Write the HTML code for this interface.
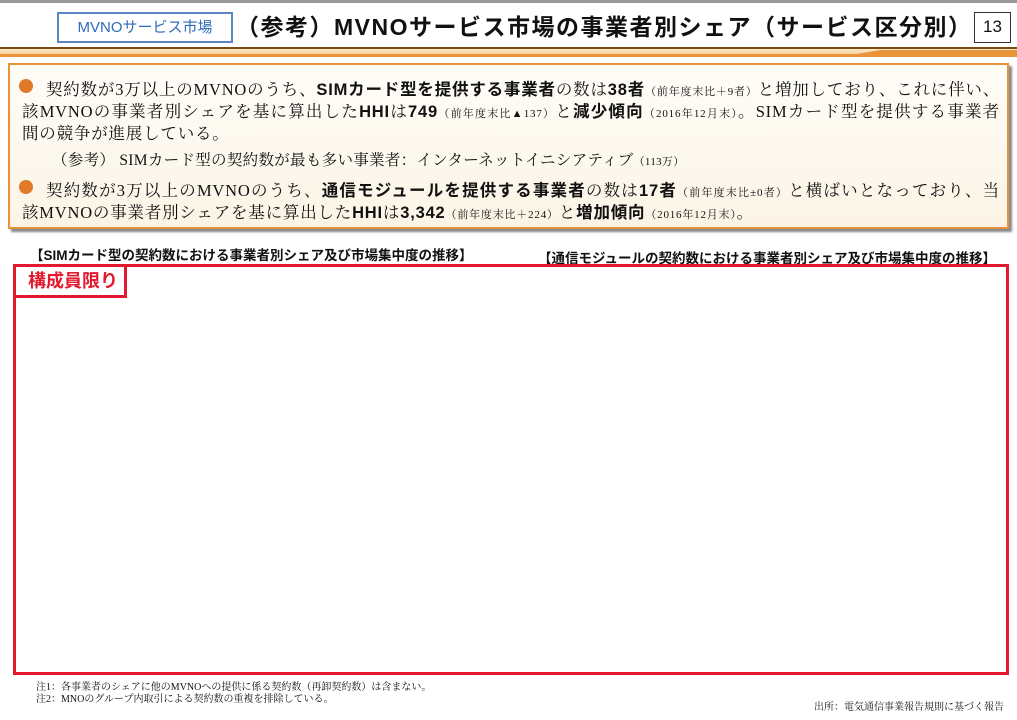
<!DOCTYPE html>
<html><head><meta charset="utf-8">
<style>
*{margin:0;padding:0;box-sizing:border-box}
body{width:1017px;height:720px;position:relative;background:#fff;font-family:"Liberation Serif","Noto Serif CJK SC","Noto Sans CJK JP",serif;color:#111;overflow:hidden}
.abs{position:absolute}
.g{font-family:"Liberation Sans","Noto Sans CJK JP",sans-serif}
b{font-family:"Liberation Sans","Noto Sans CJK JP",sans-serif;font-weight:bold}
small{font-size:11px}
.t{position:absolute;left:22px;font-size:16.5px;white-space:nowrap;letter-spacing:0.8px}
.j{text-align:justify;text-align-last:justify;white-space:normal;overflow:hidden;height:24px}
</style></head><body>
<div class="abs" style="left:0;top:0;width:1017px;height:3px;background:#999"></div>
<div class="abs g" style="left:57px;top:12px;width:176px;height:31px;border:2px solid #5b87c4;color:#2f6cb8;font-size:15px;line-height:27px;text-align:center">MVNOサービス市場</div>
<div class="abs g" style="left:236px;top:10px;width:732px;font-size:23px;font-weight:bold;white-space:nowrap;line-height:34px;text-align:justify;text-align-last:justify;letter-spacing:1.5px">（参考）MVNOサービス市場の事業者別シェア（サービス区分別）</div>
<div class="abs g" style="left:974px;top:12px;width:37px;height:31px;border:1.5px solid #333;font-size:17px;line-height:28px;text-align:center">13</div>
<div class="abs" style="left:0;top:47px;width:1017px;height:10px;border-top:2px solid #7a4a12;background:linear-gradient(#fde9c8,#f7d29c);border-bottom:3px solid #e8923a"></div>
<svg class="abs" style="left:840px;top:47px" width="177" height="10"><polygon points="0,10 40,3 177,3 177,10" fill="#e8923a"/></svg>
<div class="abs" style="left:8px;top:63px;width:1001px;height:166px;border:2px solid #e8923a;background:linear-gradient(#fffdf8,#fbf4e6);box-shadow:3px 3px 2px #888"></div>
<div class="abs" style="left:19px;top:79px;width:14px;height:14px;border-radius:50%;background:#e07a28"></div>
<div class="abs" style="left:19px;top:180px;width:14px;height:14px;border-radius:50%;background:#e07a28"></div>
<div class="t j" style="top:76px;left:46px;width:954px">契約数が3万以上のMVNOのうち、<b>SIMカード型を提供する事業者</b>の数は<b>38者</b><small>（前年度末比＋9者）</small>と増加しており、これに伴い、当</div>
<div class="t j" style="top:98px;width:978px">該MVNOの事業者別シェアを基に算出した<b>HHI</b>は<b>749</b><small>（前年度末比▲137）</small>と<b>減少傾向</b><small>（2016年12月末）</small>。SIMカード型を提供する事業者</div>
<div class="t" style="top:120px">間の競争が進展している。</div>
<div class="t" style="top:148px;left:52px;font-size:15.5px;letter-spacing:0.3px">（参考） SIMカード型の契約数が最も多い事業者：インターネットイニシアティブ<small>（113万）</small></div>
<div class="t j" style="top:177px;left:46px;width:954px">契約数が3万以上のMVNOのうち、<b>通信モジュールを提供する事業者</b>の数は<b>17者</b><small>（前年度末比±0者）</small>と横ばいとなっており、当</div>
<div class="t" style="top:199px">該MVNOの事業者別シェアを基に算出した<b>HHI</b>は<b>3,342</b><small>（前年度末比＋224）</small>と<b>増加傾向</b><small>（2016年12月末）</small>。</div>
<div class="abs g" style="left:30px;top:244px;font-size:13.5px;font-weight:bold;white-space:nowrap">【SIMカード型の契約数における事業者別シェア及び市場集中度の推移】</div>
<div class="abs g" style="left:538px;top:247px;font-size:13.5px;font-weight:bold;white-space:nowrap">【通信モジュールの契約数における事業者別シェア及び市場集中度の推移】</div>
<div class="abs" style="left:13px;top:264px;width:996px;height:411px;border:3px solid #e3192f"></div>
<div class="abs g" style="left:13px;top:264px;width:114px;height:34px;border:3px solid #e3192f;color:#e3192f;font-size:18px;font-weight:bold;line-height:28px;padding-left:12px">構成員限り</div>
<div class="abs" style="left:36px;top:682px;font-size:10px;line-height:12px;white-space:nowrap">注1：各事業者のシェアに他のMVNOへの提供に係る契約数（再卸契約数）は含まない。<br>注2：MNOのグループ内取引による契約数の重複を排除している。</div>
<div class="abs" style="left:814px;top:698px;font-size:10px;white-space:nowrap">出所：電気通信事業報告規則に基づく報告</div>
</body></html>
